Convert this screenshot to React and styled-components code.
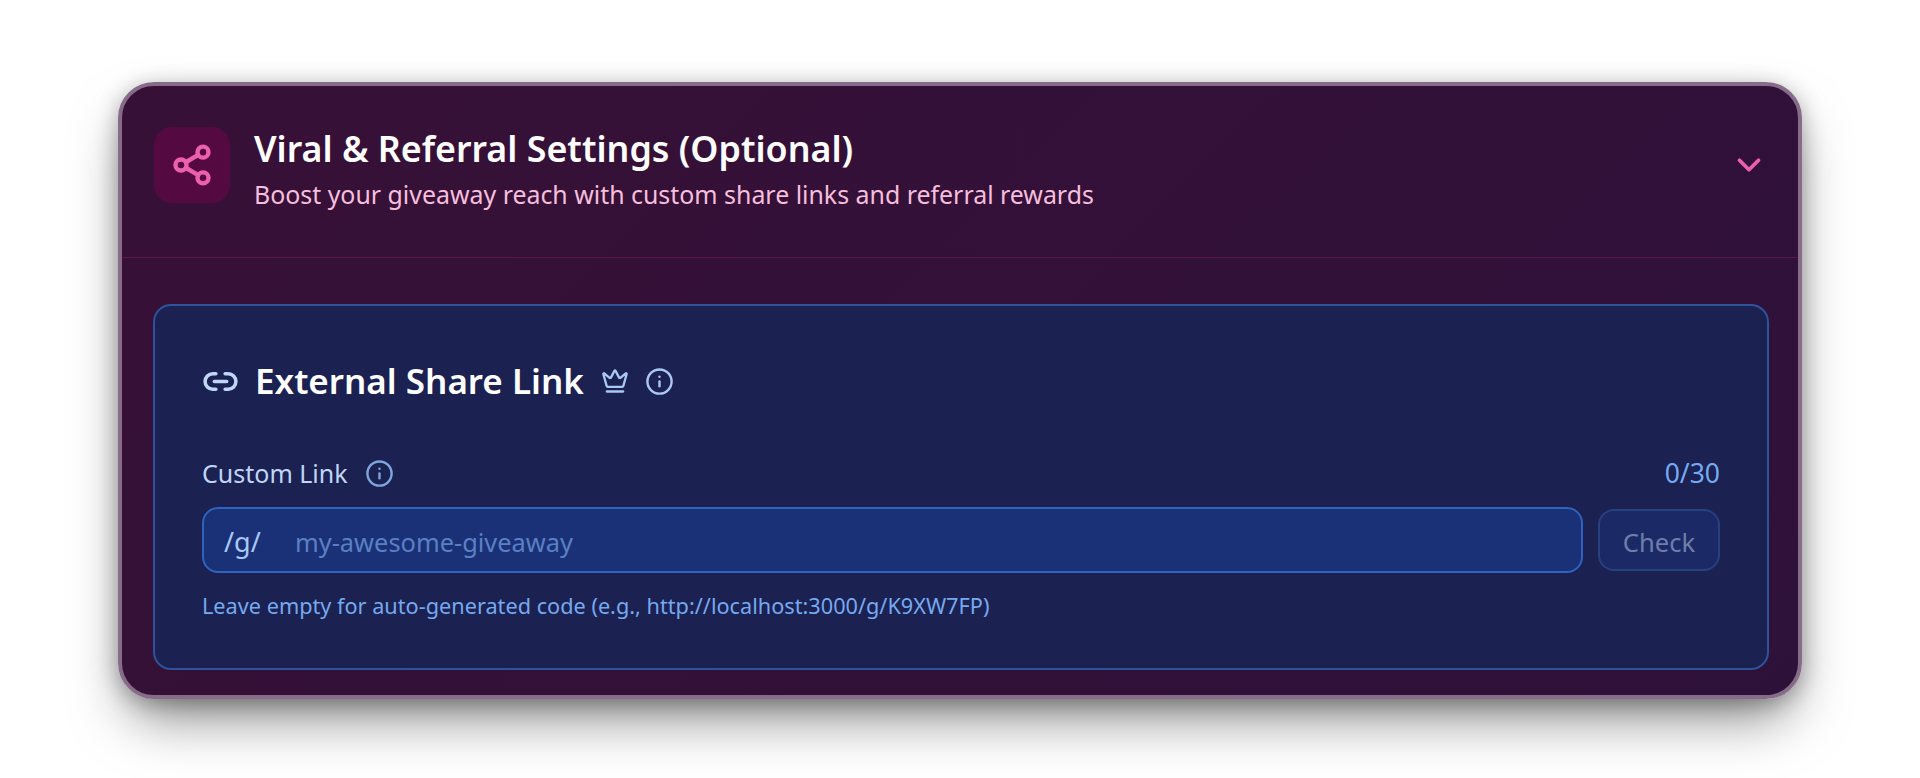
import React from 'react'
import styled, { createGlobalStyle } from 'styled-components'
import { Share2, ChevronDown, Link2, Crown, Info } from 'lucide-react'

const Global = createGlobalStyle`
  html, body {
    margin: 0;
    padding: 0;
    background: #fff;
  }
  body {
    font-family: "Noto Sans", "Open Sans", sans-serif;
  }
`

const Page = styled.div`
  width: 1920px;
  height: 778px;
  padding: 82px 118px 0;
  box-sizing: border-box;
  overflow: hidden;
`

const Card = styled.section`
  height: 617px;
  box-sizing: border-box;
  border: 4px solid #866c88;
  border-radius: 36px;
  background: linear-gradient(135deg, #371037, #2e1139);
  box-shadow: 0 28px 56px -12px rgba(0,0,0,0.5), 0 4px 22px 0 rgba(0,0,0,0.28);
`

const Header = styled.div`
  height: 172px;
  box-sizing: border-box;
  border-bottom: 1px solid #5b1650;
  padding: 41px 33px 0 32px;
  display: flex;
  align-items: flex-start;
`

const IconBox = styled.div`
  width: 76px;
  height: 76px;
  border-radius: 18px;
  background: #540a41;
  color: #ec5fad;
  display: flex;
  align-items: center;
  justify-content: center;
  flex: none;
`

const HeaderText = styled.div`
  margin-left: 24px;
  flex: 1;
`

const Title = styled.h2`
  margin: -1px 0 0;
  font-size: 35.8px;
  line-height: 44px;
  font-weight: 600;
  color: #fff;
`

const Subtitle = styled.p`
  margin: 8px 0 0;
  font-size: 24.9px;
  line-height: 32px;
  color: #f7bfdc;
`

const Chevron = styled.div`
  color: #ec5fad;
  margin: 19px -3px 0 0;
  display: flex;
`

const Body = styled.div`
  padding: 46px 29px 0 31px;
`

const Panel = styled.div`
  height: 366px;
  box-sizing: border-box;
  border: 2px solid #2d539a;
  border-radius: 18px;
  background: #1b2150;
  padding: 0 47px;
`

const PanelHead = styled.div`
  display: flex;
  align-items: center;
  height: 76px;
  margin-top: 37px;
  color: #c0d6f7;
`

const PanelTitle = styled.h3`
  margin: 0 17px 0 16px;
  font-size: 35px;
  line-height: 44px;
  font-weight: 600;
  color: #fff;
`

const HeadInfo = styled.span`
  display: flex;
  margin-left: 16px;
  color: #a9c8f5;
`

const LabelRow = styled.div`
  display: flex;
  align-items: center;
  margin-top: 38px;
  height: 32px;
`

const Label = styled.span`
  font-size: 25px;
  line-height: 32px;
  color: #c0d6f7;
`

const LabelInfo = styled.span`
  display: flex;
  margin-left: 17px;
  color: #7ea4dd;
`

const Counter = styled.span`
  margin-left: auto;
  font-size: 26.5px;
  line-height: 32px;
  color: #76a9f0;
`

const InputRow = styled.div`
  display: flex;
  align-items: center;
  gap: 15px;
  margin-top: 18px;
`

const InputBox = styled.div`
  flex: 1;
  height: 66px;
  box-sizing: border-box;
  border: 2px solid #2f63bd;
  border-radius: 16px;
  background: #1b3177;
  display: flex;
  align-items: center;
  padding: 3px 20px 0;
`

const Prefix = styled.span`
  font-size: 27px;
  color: #a9c8f5;
  width: 71px;
`

const Field = styled.input`
  flex: 1;
  border: 0;
  outline: 0;
  padding: 0;
  background: transparent;
  font-family: inherit;
  font-size: 25.4px;
  color: #fff;
  &::placeholder {
    color: #5a80c4;
    opacity: 1;
  }
`

const CheckButton = styled.button`
  width: 122px;
  height: 62px;
  box-sizing: border-box;
  border: 2px solid #27417f;
  border-radius: 16px;
  background: #1b2a66;
  color: #6d7fa9;
  font-family: inherit;
  font-size: 25.6px;
  padding: 5px 0 0;
`

const Hint = styled.p`
  margin: 19px 0 0;
  font-size: 21.7px;
  line-height: 28px;
  color: #76a9f0;
`

export default function App() {
  return (
    <Page>
      <Global />
      <Card>
        <Header>
          <IconBox><Share2 size={44} strokeWidth={2.4} /></IconBox>
          <HeaderText>
            <Title>Viral &amp; Referral Settings (Optional)</Title>
            <Subtitle>Boost your giveaway reach with custom share links and referral rewards</Subtitle>
          </HeaderText>
          <Chevron><ChevronDown size={38} strokeWidth={2.4} /></Chevron>
        </Header>
        <Body>
          <Panel>
            <PanelHead>
              <Link2 size={37} strokeWidth={2.3} />
              <PanelTitle>External Share Link</PanelTitle>
              <Crown size={28} strokeWidth={2} color="#a9c8f5" />
              <HeadInfo><Info size={29} strokeWidth={2} /></HeadInfo>
            </PanelHead>
            <LabelRow>
              <Label>Custom Link</Label>
              <LabelInfo><Info size={29} strokeWidth={2} /></LabelInfo>
              <Counter>0/30</Counter>
            </LabelRow>
            <InputRow>
              <InputBox>
                <Prefix>/g/</Prefix>
                <Field placeholder="my-awesome-giveaway" readOnly />
              </InputBox>
              <CheckButton>Check</CheckButton>
            </InputRow>
            <Hint>Leave empty for auto-generated code (e.g., http://localhost:3000/g/K9XW7FP)</Hint>
          </Panel>
        </Body>
      </Card>
    </Page>
  )
}
